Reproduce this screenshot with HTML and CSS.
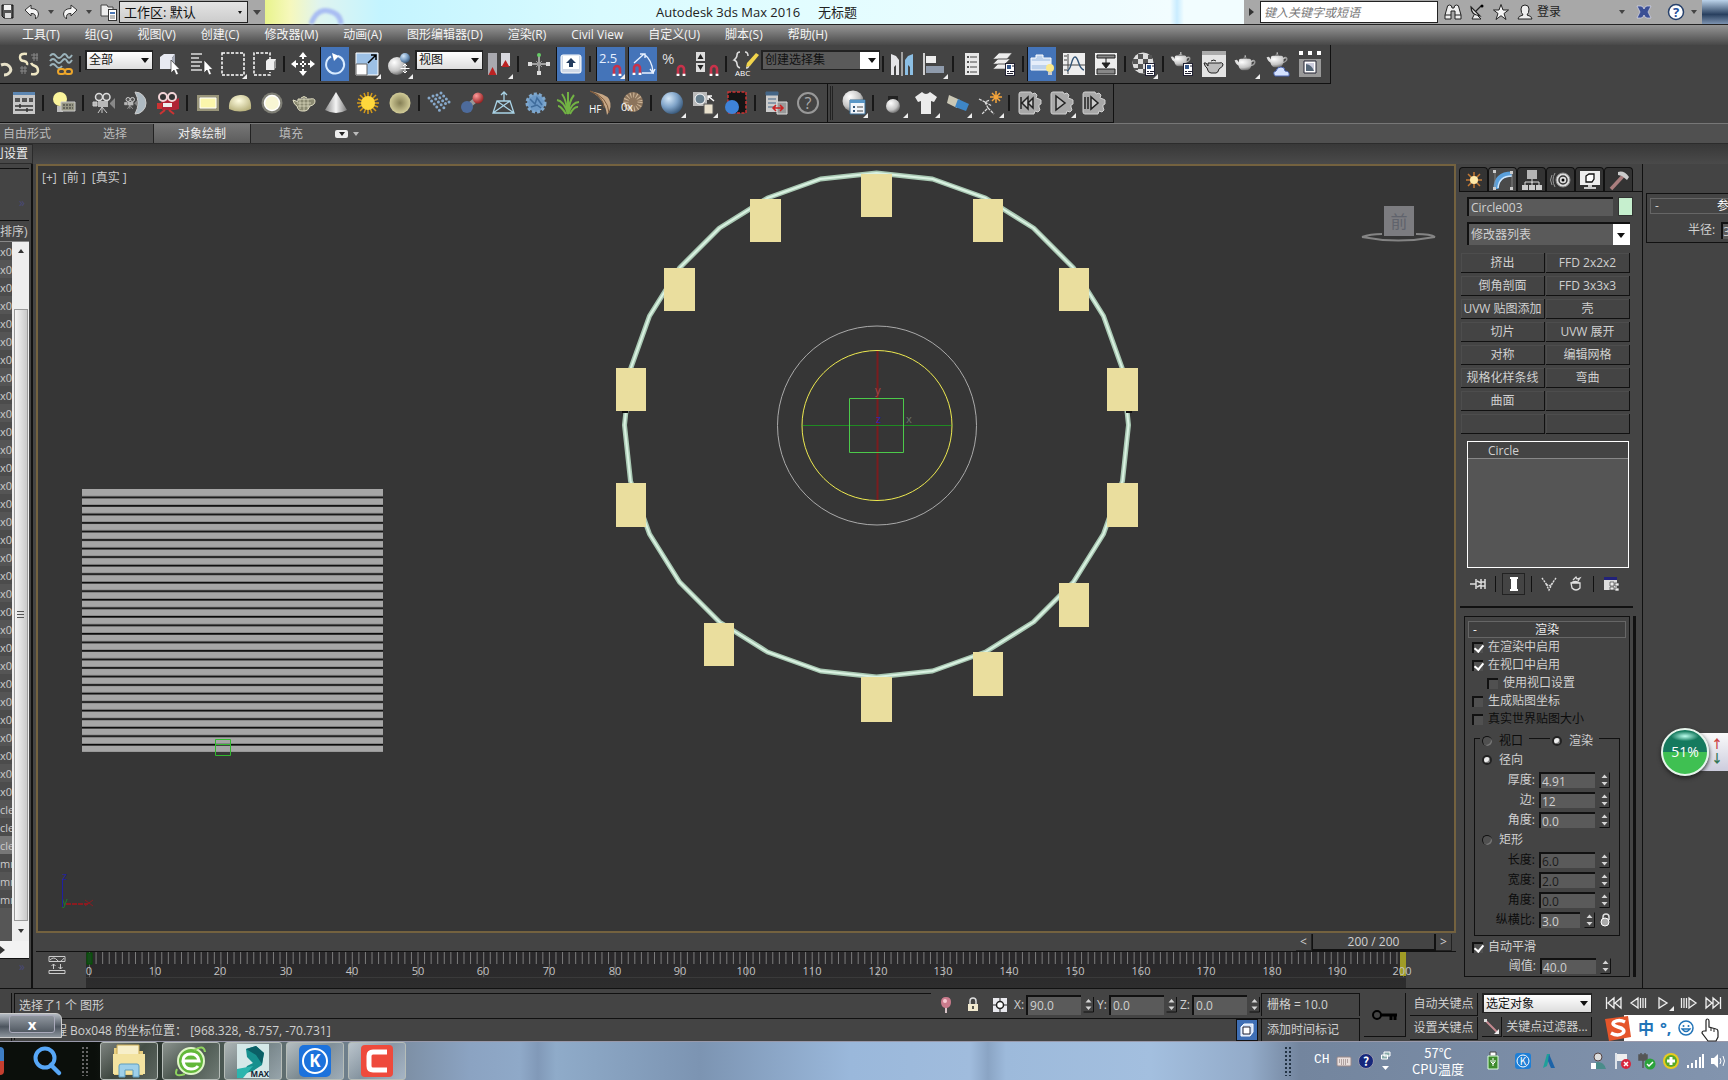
FILE: index.html
```html
<!DOCTYPE html>
<html lang="zh-CN">
<head>
<meta charset="utf-8">
<title>Autodesk 3ds Max 2016 无标题</title>
<link rel="stylesheet" href="styles.css">
</head>
<body>
<svg class="defs" aria-hidden="true">
  <defs>
    <radialGradient id="gBlue" cx=".35" cy=".3" r=".8"><stop offset="0" stop-color="#d5e8f8"/><stop offset=".5" stop-color="#7fa3c8"/><stop offset="1" stop-color="#2b4a6b"/></radialGradient>
    <radialGradient id="gWhite" cx=".35" cy=".3" r=".8"><stop offset="0" stop-color="#fff"/><stop offset=".6" stop-color="#c4c4c4"/><stop offset="1" stop-color="#555"/></radialGradient>
    <radialGradient id="gRed" cx=".35" cy=".3" r=".8"><stop offset="0" stop-color="#ff9c9c"/><stop offset="1" stop-color="#8c1414"/></radialGradient>
    <radialGradient id="gCream" cx=".45" cy=".35" r=".7"><stop offset="0" stop-color="#fffde0"/><stop offset="1" stop-color="#b5ae78"/></radialGradient>
    <radialGradient id="gDisc"><stop offset="0" stop-color="#857f55"/><stop offset="1" stop-color="#d2cc98"/></radialGradient>
    <linearGradient id="gCone"><stop offset="0" stop-color="#888"/><stop offset=".5" stop-color="#f5f5f5"/><stop offset="1" stop-color="#777"/></linearGradient>
    <symbol id="magnet" viewBox="0 0 10 12"><path d="M2 11V5a3 3 0 0 1 6 0v6" fill="none" stroke="#c8324a" stroke-width="2.6"/><path d="M.6 10.8h2.8M6.6 10.8h2.8" stroke="#fff" stroke-width="2.2"/></symbol>
    <symbol id="teapot" viewBox="0 0 24 20"><path d="M5 7q0-2 2-2h9q2 0 2 2 3-2 4.500 0.500Q23.500 11 18 13q-1.500 4-4 4H9q-3 0-4.500-5Q2 11 .500 6.500L3 6q1 1 2 3z" fill="url(#gWhite)"/><path d="M18.500 8.500q3-1.500 2.500.500t-2.700 2.500z" fill="#444"/><path d="M9 4.500q2.500-1.800 5 0zM11 1.500h1.500V3H11z" fill="#ddd"/></symbol>
    <symbol id="cursor" viewBox="0 0 10 16"><path d="M1 0v13l3-3 2 5 2.500-1L6.500 9.500H10z" fill="#fff" stroke="#333" stroke-width=".7"/></symbol>
    <symbol id="gear" viewBox="0 0 24 24"><path d="M3 1h10l1 2 3-1 2 2-1 3 3 1 2 1v4l-2 1v2l1 3-2 2-3-1-1 3H3q-2 0-2-2V3q0-2 2-2z" fill="#a8a8a8" stroke="#d0d0d0"/></symbol>
    <symbol id="spin" viewBox="0 0 11 16"><path d="M.5 15.500h10V.5" fill="none" stroke="#111"/><path d="M2.500 6 5.500 2.500 8.500 6zM2.500 10h6l-3 3.500z" fill="#d5d5d5"/></symbol>
    <symbol id="panel" viewBox="0 0 10 13"><rect x=".5" y=".5" width="9" height="12" fill="#fff" stroke="#223"/><rect x="2" y="2" width="4" height="4" fill="#37598c"/><path d="M7 3h2M2 8.500h2M5 8.500h4M2 10.500h6" stroke="#223"/></symbol>
    <symbol id="camera" viewBox="0 0 24 24"><circle cx="7" cy="6" r="3.500" fill="#555" stroke="#ddd" stroke-width="1.500"/><circle cx="14.500" cy="6" r="3.500" fill="#555" stroke="#ddd" stroke-width="1.500"/><path d="M6 10h10v6H6z" fill="#b8b8b8"/><path d="M18 12l5-5v11l-5-5z" fill="#888"/><path d="M1 11h4v4H1zM10 16l-4 6M10 16l5 6M10 16v6" stroke="#ccc" fill="#bbb"/></symbol>
  </defs>
</svg>

<header class="title">
  <div class="quick">
    <button aria-label="保存"><svg width="16" height="18" viewBox="0 0 16 18"><path d="M2 2h11v13H4l-2-2z" fill="#555" stroke="#111"/><path d="M4 2h7v5H4z" fill="#f2f2f2"/><path d="M5 10h6v5H5z" fill="#ddd"/></svg></button>
    <button class="undo" aria-label="撤消"><svg width="16" height="18" viewBox="0 0 16 18"><path d="M1 7l6-5v3.500q7 0 7.500 5.500 0 3-3 5 1-6-4.500-5.500V13z" fill="#f5f5f5" stroke="#333"/></svg></button><i class="tri"></i>
    <button class="redo" aria-label="重做"><svg width="16" height="18" viewBox="0 0 16 18"><path d="M15 7L9 2v3.500q-7 0-7.500 5.500 0 3 3 5-1-6 4.500-5.500V13z" fill="#f5f5f5" stroke="#333"/></svg></button><i class="tri"></i>
    <button class="proj" aria-label="项目文件夹"><svg width="18" height="20" viewBox="0 0 18 20"><path d="M1 3h6l1 2h5v9H1z" fill="#eee" stroke="#444"/><rect x="8.500" y="7.500" width="8" height="11" fill="#fff" stroke="#333"/><path d="M10 10h5v2h-5z" fill="#4a76b5"/><path d="M10 14h5M10 16h5" stroke="#777"/></svg></button>
    <label class="sel work"><select aria-label="工作区"><option>工作区: 默认</option></select></label>
    <i class="tri wide"></i>
  </div>
  <svg class="glow" width="60" height="24" viewBox="0 0 60 24"><path d="M12 24Q18 8 30 11t12 13" fill="none" stroke="#a9bdf2" stroke-width="5"/></svg>
  <h1><span>Autodesk 3ds Max 2016</span><span>无标题</span></h1>
  <div class="info">
    <i class="right-tri"></i>
    <input type="text" aria-label="搜索" placeholder="键入关键字或短语">
    <button aria-label="查找"><svg width="18" height="18" viewBox="0 0 18 18"><path d="M3 5q0-3 2.500-3T8 5h2q0-3 2.500-3T15 5l2 7v4h-6V8H7v8H1v-4z" fill="#eee" stroke="#222"/><path d="M1 12h6M11 12h6" stroke="#222"/></svg></button>
    <button aria-label="通讯中心"><svg width="18" height="18" viewBox="0 0 18 18"><path d="M3 4q0 8 9 9zM3 4l9 9M8 8l5-5" fill="#eee" stroke="#222" stroke-width="1.200"/><path d="M6 12l-2 4h9l-3-3" fill="#eee" stroke="#222"/><circle cx="14" cy="3" r="1.500"/></svg></button>
    <button aria-label="收藏夹"><svg width="18" height="18" viewBox="0 0 18 18"><path d="M9 1.500l2 5.500h5.500L12 10.500l2 6-5-3.800-5 3.800 2-6L1.500 7H7z" fill="#f5f5f5" stroke="#222"/></svg></button>
    <button class="login"><svg width="18" height="18" viewBox="0 0 18 18"><path d="M2 16q0-3 5-4-2-2-2-6 0-4 4-4t4 4q0 4-2 6 5 1 5 4z" fill="#eee" stroke="#222"/></svg>登录</button>
    <i class="tri push"></i>
    <button aria-label="Exchange"><svg width="18" height="18" viewBox="0 0 18 18"><path d="M2 3h4q2 0 3 3 1-3 3-3h4q-3 6-3 6t3 6h-4q-2 0-3-3-1 3-3 3H2q3-6 3-6z" fill="#3b4f94" stroke="#dde" stroke-width=".7"/></svg></button>
    <button aria-label="帮助" class="help"><svg width="18" height="18" viewBox="0 0 18 18"><circle cx="9" cy="9" r="7.500" fill="#fff" stroke="#26406b" stroke-width="1.500"/><text x="9" y="14" text-anchor="middle" font-size="13" font-weight="bold" fill="#26509c">?</text></svg></button><i class="tri"></i>
  </div>
  <div class="winctl"></div>
</header>

<nav class="menu">
  <a href="#">工具(T)</a><a href="#">组(G)</a><a href="#">视图(V)</a><a href="#">创建(C)</a><a href="#">修改器(M)</a><a href="#">动画(A)</a><a href="#">图形编辑器(D)</a><a href="#">渲染(R)</a><a href="#">Civil View</a><a href="#">自定义(U)</a><a href="#">脚本(S)</a><a href="#">帮助(H)</a>
</nav>

<div class="bar bar1">
 <div class="group">
  <button class="half" aria-label="链接"><svg width="24" height="24" viewBox="0 0 24 24"><path d="M12 13q5-2 8 1t1 6-6 3" fill="none" stroke="#e6e0c8" stroke-width="3"/></svg></button>
  <button aria-label="断开链接"><svg width="24" height="24" viewBox="0 0 24 24"><path d="M10 2Q3 1 3 5t4 4q4 1 3 4" fill="none" stroke="#efe7c4" stroke-width="2.500"/><path d="M14 22q7 1 7-3t-3-5q-3-1-4-3" fill="none" stroke="#efe7c4" stroke-width="2.500"/><path d="M14 3h7M15 6h6M17 1v8M20 1v8M3 16h7M3 19h7M5 14v8M8 14v8" stroke="#888"/></svg></button>
  <button aria-label="绑定到空间扭曲"><svg width="24" height="24" viewBox="0 0 24 24"><g fill="none" stroke="#9cb4bc" stroke-width="2"><path d="M1 4q3-4 6 0t6 0 5 0 5-1M1 9q3-4 6 0t6 0 5 0 5-1M1 14q3-4 6 0t6 0"/></g><rect x="9" y="17" width="7" height="5" rx="2.500" fill="none" stroke="#eda62b" stroke-width="2"/><rect x="16" y="17" width="7" height="5" rx="2.500" fill="none" stroke="#eda62b" stroke-width="2"/></svg></button>
  <i class="sep w"></i>
  <label class="sel all"><select aria-label="选择过滤器"><option>全部</option></select></label>
  <button aria-label="选择对象"><svg width="24" height="24" viewBox="0 0 24 24"><path d="M3 5l4-3h11l-3 4v11H3z" fill="#e8eaf2"/><path d="M15 6l3-4v12l-3 3z" fill="#a6abb8"/><use href="#cursor" x="13" y="8" width="10" height="16"/></svg></button>
  <button aria-label="按名称选择"><svg width="24" height="24" viewBox="0 0 24 24"><path d="M2 2h11M2 6h8M2 10h11M2 14h9M2 18h11" stroke="#ddd" stroke-width="1.500"/><use href="#cursor" x="14" y="8" width="10" height="16"/></svg></button>
  <button class="fly" aria-label="矩形选择区域"><svg width="24" height="24" viewBox="0 0 24 24"><path d="M1 1h22v22H1z" fill="none" stroke="#fff" stroke-width="1.500" stroke-dasharray="3 1.500"/></svg></button>
  <button aria-label="窗口/交叉"><svg width="24" height="24" viewBox="0 0 24 24"><path d="M17 8V1H1v22h16v-3" fill="none" stroke="#fff" stroke-width="1.500" stroke-dasharray="3 1.500"/><path d="M13 9l2-2h8v8l-2 3h-8z" fill="#eee"/><path d="M21 10l2-3v8l-2 3z" fill="#999"/></svg></button>
  <i class="sep"></i>
  <button aria-label="选择并移动"><svg width="24" height="24" viewBox="0 0 24 24"><path d="M12 0l4 5H8zM12 24l4-5H8zM0 12l5-4v8zM24 12l-5-4v8z" fill="#fff"/><path d="M12 5v14M5 12h14" stroke="#fff" stroke-width="2" stroke-dasharray="2 2"/></svg></button>
  <button class="on" aria-label="选择并旋转"><svg width="24" height="24" viewBox="0 0 24 24"><path d="M15 4a9 9 0 1 1-7 .5" fill="none" stroke="#d8ebff" stroke-width="2"/><path d="M9 1l7 3-5 5z" fill="#fff"/></svg></button>
  <button class="fly" aria-label="选择并缩放"><svg width="24" height="24" viewBox="0 0 24 24"><path d="M1 1h22v22H1z" fill="#9dc1e6" stroke="#fff"/><path d="M1 12h11v11H1z" fill="#fff" stroke="#666"/><path d="M13 11l8-8M16 3h5v5" fill="none" stroke="#000" stroke-width="1.500"/></svg></button>
  <button class="fly" aria-label="选择并放置"><svg width="24" height="24" viewBox="0 0 24 24"><circle cx="10" cy="14" r="9" fill="url(#gWhite)"/><circle cx="18" cy="6" r="5" fill="url(#gBlue)"/><path d="M18 12v9M13.500 16.500h9M16 14l2-2 2 2M16 19l2 2 2-2" fill="none" stroke="#fff"/></svg></button>
  <label class="sel all"><select aria-label="参考坐标系"><option>视图</option></select></label>
  <button class="fly" aria-label="使用轴点中心"><svg width="24" height="24" viewBox="0 0 24 24"><path d="M1 1h9v22H1z" fill="#a9a9af"/><path d="M14 1h9v13h-9z" fill="#d9d9df"/><path d="M5.500 15l4 8h-8zM18.500 8l4 7h-8z" fill="#b22"/></svg></button>
  <i class="sep w"></i>
  <button aria-label="选择并操纵"><svg width="24" height="24" viewBox="0 0 24 24"><path d="M12 3v18M3 12h18" stroke="#fff"/><path d="M9 9l6 6M15 9l-6 6" stroke="#999"/><circle cx="12" cy="3" r="2" fill="#6c6"/><path d="M1 10h4v4H1zM19 10h4v4h-4zM10 19h4v4h-4z" fill="#ddd"/></svg></button>
  <button class="on" aria-label="键盘快捷键覆盖"><svg width="24" height="24" viewBox="0 0 24 24"><rect x="2" y="3" width="20" height="18" rx="2" fill="#cfd8e6" stroke="#fff"/><rect x="4" y="4" width="16" height="13" fill="#fff"/><path d="M12 6l5 5h-3v4h-4v-4H7z" fill="#233b5e"/></svg></button>
  <i class="sep w"></i>
  <button class="on fly" aria-label="捕捉开关"><svg width="26" height="26" viewBox="0 0 26 26"><text x="1" y="12" font-size="13" fill="#e6f0ff">2.5</text><use href="#magnet" x="14" y="13" width="10" height="12"/></svg></button>
  <button class="on" aria-label="角度捕捉"><svg width="26" height="26" viewBox="0 0 26 26"><path d="M12 22h12M4 12L14 3M14 3q8 6 9 18M10 3h5v4M20 18l3 4 2-4" fill="none" stroke="#e6f0ff" stroke-width="1.400"/><use href="#magnet" x="2" y="12" width="10" height="12"/></svg></button>
  <button aria-label="百分比捕捉"><svg width="26" height="26" viewBox="0 0 26 26"><text x="0" y="13" font-size="15" fill="#ddd">%</text><use href="#magnet" x="14" y="13" width="10" height="12"/></svg></button>
  <button aria-label="微调器捕捉"><svg width="26" height="26" viewBox="0 0 26 26"><path d="M2 1h9v9H2zM2 12h9v9H2z" fill="#ddd"/><path d="M3.500 8h6l-3-5zM3.500 14h6l-3 5z" fill="#222"/><use href="#magnet" x="15" y="13" width="10" height="12"/></svg></button>
  <i class="sep"></i>
  <button aria-label="编辑命名选择集"><svg width="26" height="28" viewBox="0 0 26 28"><path d="M8 2Q5 2 5 5t-3 5q3 1 3 4t3 4M14 18q3 0 3-4M13 2q3 0 3 4" fill="none" stroke="#ddd" stroke-width="1.500"/><path d="M24 3l3 2-9 11-4 1 1-4z" fill="#f1d44c"/><text x="3" y="26" font-size="8" fill="#fff">ABC</text></svg></button>
  <label class="sel named"><select aria-label="创建选择集"><option>创建选择集</option></select></label>
  <i class="sep"></i>
  <button aria-label="镜像"><svg width="24" height="24" viewBox="0 0 24 24"><path d="M1 2l5 2 3 4v15H6V13l-2 2v8H1z" fill="#e5e5e8"/><path d="M23 2l-5 2-3 4v15h3V13l2 2v8h3z" fill="#8cbfe4"/><path d="M12 0v24" stroke="#fff"/></svg></button>
  <button class="fly" aria-label="对齐"><svg width="24" height="24" viewBox="0 0 24 24"><path d="M2 1v22" stroke="#fff" stroke-width="1.500"/><path d="M4 4h10v7H4z" fill="#eee"/><path d="M4 14h18v7H4z" fill="#8f9bac"/></svg></button>
  <i class="sep"></i>
  <button aria-label="层资源管理器"><svg width="24" height="24" viewBox="0 0 24 24"><path d="M5 1h14v22H5z" fill="#e9e9e9"/><path d="M10 5h7M10 10h7M10 15h7M10 20h7" stroke="#444"/><path d="M7 4h2v2H7zM7 9h2v2H7zM7 14h2v2H7zM7 19h2v2H7z" fill="#555"/></svg></button>
  <button aria-label="层管理器"><svg width="24" height="24" viewBox="0 0 24 24"><path d="M7 1h13l-5 6H1zM6 7h12l-5 5H1zM6 12h12l-5 5H1z" fill="#eee" stroke="#555" stroke-width=".6"/><use href="#panel" x="13" y="11" width="10" height="13"/></svg></button>
  <i class="sep"></i>
  <button class="on" aria-label="切换功能区"><svg width="26" height="24" viewBox="0 0 26 24"><path d="M2 6h5V3h7v3h8v12H2z" fill="#bed2ec" stroke="#fff"/><path d="M2 9h20v4H2z" fill="#e6eefa"/><circle cx="21" cy="16" r="4" fill="#fbe88a"/><path d="M19 20h4v3h-4z" fill="#ccc"/></svg></button>
  <button aria-label="曲线编辑器"><svg width="24" height="24" viewBox="0 0 24 24"><path d="M1 1h22v22H1z" fill="#eee"/><path d="M6 2v20M1 13h22M2 4h3M2 8h3M2 18h3" stroke="#444"/><path d="M5 19C10 18 9 5 13 5s3 12 9 13" fill="none" stroke="#357" stroke-width="1.400"/></svg></button>
  <button aria-label="图解视图"><svg width="24" height="24" viewBox="0 0 24 24"><path d="M1 1h22v22H1z" fill="#eee"/><path d="M3 3h18v3H3zM3 17h18v5H3z" fill="#888" stroke="#222"/><path d="M12 6v9M8 11l4 5 4-5z" stroke="#222" fill="#222"/></svg></button>
  <i class="sep"></i>
  <button class="fly" aria-label="材质编辑器"><svg width="24" height="24" viewBox="0 0 24 24"><circle cx="11" cy="11" r="10.500" fill="#ddd"/><path d="M6 2h5v5H6zM11 7h5v5h-5zM16 3h4v4h-4zM1 7h5v5H1zM6 12h5v5H6zM11 17h4v4h-4zM2 16h4v2H2z" fill="#555"/><use href="#panel" x="13" y="11" width="10" height="13"/></svg></button>
  <i class="sep"></i>
  <button aria-label="渲染设置"><svg width="24" height="26" viewBox="0 0 24 26"><use href="#teapot" width="22" height="18"/><use href="#panel" x="13" y="12" width="10" height="13"/></svg></button>
  <button aria-label="渲染帧窗口"><svg width="24" height="26" viewBox="0 0 24 26"><path d="M0 0h24v26H0z" fill="#e4e4e4"/><path d="M0 0h24v4H0z" fill="#aaa"/><path d="M6 12h11q3-1 4 1t-4 5q-1 4-3 4H9q-3 0-4-5-2-1-3-5h2l2 3zM9 10q3-2 5 0" fill="#bbb" stroke="#222"/></svg></button>
  <button class="fly" aria-label="渲染产品"><svg width="24" height="24" viewBox="0 0 24 24"><use href="#teapot" y="2" width="23" height="19"/></svg></button>
  <button aria-label="云渲染"><svg width="24" height="26" viewBox="0 0 24 26"><use href="#teapot" width="23" height="19"/><path d="M9 25q-3-4 1-5 1-4 5-4t4 4q5 0 4 5z" fill="#d4e2ff" stroke="#4a62ac"/></svg></button>
  <button aria-label="渲染库"><svg width="24" height="26" viewBox="0 0 24 26"><path d="M1 0h4v4H1zM10 0h4v4h-4zM19 0h4v4h-4z" fill="#fff"/><path d="M1 8h22v18H1z" fill="#999"/><path d="M6 10h12v12H6z" fill="#fff" stroke="#223"/><path d="M8 12h8v8H8z" fill="#ccd"/><path d="M8 20v-7q6 1 8 7z" fill="#567"/></svg></button>
 </div>
</div>

<div class="bar bar2">
 <div class="group">
  <button class="first" aria-label="场景设置"><svg width="24" height="24" viewBox="0 0 24 24"><path d="M1 1h22v22H1z" fill="#c8c8c8"/><path d="M1 1h22v3H1z" fill="#5c86b2"/><path d="M3 7h5v4H3zM10 7h5v4h-5zM17 7h4v4h-4z" fill="#555"/><path d="M3 15h18M3 19h18M8 13v4M15 17v4" stroke="#333" stroke-width="1.500"/></svg></button>
  <i class="sep"></i>
  <button aria-label="灯光"><svg width="24" height="24" viewBox="0 0 24 24"><circle cx="8" cy="8" r="7" fill="#fbf49b"/><path d="M5 15h6v6H5z" fill="#bbb"/><path d="M9 11h14v9H9z" fill="#969684" stroke="#ccc"/><path d="M11 14h10M11 17h10" stroke="#333" stroke-dasharray="2 1"/></svg></button>
  <i class="sep"></i>
  <button aria-label="摄影机"><svg width="24" height="24" viewBox="0 0 24 24"><use href="#camera" width="24" height="24"/></svg></button>
  <button aria-label="半球摄影机"><svg width="24" height="24" viewBox="0 0 24 24"><path d="M11 1a11 11 0 0 1 0 22q6-11 0-22z" fill="#aebac2" stroke="#ccc"/><use href="#camera" y="4" width="14" height="16"/></svg></button>
  <button aria-label="红色摄影机"><svg width="24" height="24" viewBox="0 0 24 24"><path d="M5 9h14l4-2v11l-4 1H6z" fill="#b02436"/><circle cx="7" cy="6" r="4" fill="#333" stroke="#f3d5d8" stroke-width="2"/><circle cx="16" cy="6" r="4" fill="#333" stroke="#f3d5d8" stroke-width="2"/><path d="M7 12h9v4H7z" fill="#eee"/><path d="M2 13h3v4H2zM9 19l-5 4M13 19l5 4" fill="#c33" stroke="#c33" stroke-width="2"/></svg></button>
  <i class="sep"></i>
  <button aria-label="平面灯"><svg width="24" height="24" viewBox="0 0 24 24"><path d="M1 4h22v16H1z" fill="#99957a"/><path d="M4 7h16v10H4z" fill="#fbf6ab" stroke="#fff"/></svg></button>
  <button aria-label="穹顶灯"><svg width="24" height="24" viewBox="0 0 24 24"><path d="M1 18Q0 5 12 4t11 14q-11 5-22 0z" fill="url(#gCream)"/></svg></button>
  <button aria-label="球体灯"><svg width="24" height="24" viewBox="0 0 24 24"><circle cx="12" cy="12" r="10.500" fill="#7f7f76"/><circle cx="12" cy="12" r="7.500" fill="#f8f6d4" stroke="#fff" stroke-width="1.500"/></svg></button>
  <button aria-label="网格灯"><svg width="24" height="24" viewBox="0 0 24 24"><path d="M6 8h12q5-1 5 2 0 4-5 5-2 5-5 5h-3q-4 0-5-5-3-1-4-6l3 1q1 1 2 0zM9 7q3-3 6 0" fill="#8b8a72" stroke="#e2dfc4"/><path d="M8 8v10M12 7v13M16 8v10M5 12h14M6 15h12" stroke="#e2dfc4" stroke-width=".7"/></svg></button>
  <button aria-label="圆锥"><svg width="24" height="24" viewBox="0 0 24 24"><path d="M12 1l11 18q-11 6-22 0z" fill="url(#gCone)"/></svg></button>
  <button aria-label="太阳光"><svg width="24" height="24" viewBox="0 0 24 24"><path d="M12 1v22M1 12h22M4 4l16 16M20 4L4 20M8 2l8 20M2 8l20 8M16 2L8 22M2 16l20-8" stroke="#d59b1a" stroke-width="1.500"/><circle cx="12" cy="12" r="7" fill="#ffd83c"/></svg></button>
  <button aria-label="圆盘灯"><svg width="24" height="24" viewBox="0 0 24 24"><circle cx="12" cy="12" r="10.500" fill="url(#gDisc)"/></svg></button>
  <i class="sep"></i>
  <button aria-label="粒子阵列"><svg width="24" height="24" viewBox="0 0 24 24"><path d="M1 7l12 14M5 5l12 13M9 4l11 11M13 2l9 10" fill="none" stroke="#87a9cb" stroke-width="3" stroke-linecap="round" stroke-dasharray="0 4"/></svg></button>
  <button aria-label="融合球"><svg width="24" height="24" viewBox="0 0 24 24"><path d="M7 16L18 7" stroke="#999" stroke-width="5"/><circle cx="7" cy="16" r="6" fill="#4d6b9c"/><circle cx="18" cy="7" r="5.500" fill="url(#gRed)"/></svg></button>
  <button aria-label="代理"><svg width="24" height="24" viewBox="0 0 24 24"><path d="M5 10h13l4 12H1zM5 10l17 12M18 10L1 22M12 10V1M9 4l3-3 3 3" fill="none" stroke="#a9d3e6" stroke-width="1.300"/></svg></button>
  <button aria-label="毛发"><svg width="24" height="24" viewBox="0 0 24 24"><circle cx="12" cy="12" r="9" fill="#6b98c6"/><circle cx="12" cy="12" r="9" fill="none" stroke="#7fa8cd" stroke-width="3" stroke-dasharray="3 2"/><path d="M6 8l5 5 2-6 5 7M7 16l6-2 4 3" fill="none" stroke="#3f6c9c" stroke-width="1.500"/></svg></button>
  <button aria-label="草"><svg width="24" height="24" viewBox="0 0 24 24"><path d="M12 23Q8 10 1 9M12 23Q10 8 6 3M12 23V1M12 23q1-13 6-19M12 23q4-12 11-12M10 23Q5 15 2 15M14 23q4-8 8-7" fill="none" stroke="#72b344" stroke-width="2"/></svg></button>
  <button aria-label="HairFarm"><svg width="26" height="26" viewBox="0 0 26 26"><path d="M3 1q16 3 19 8 4 8-2 16Q18 9 3 1z" fill="#c7a785"/><path d="M3 1q18 6 19 22M3 1q14 6 14 17" fill="none" stroke="#7c5a3c"/><text x="2" y="23" font-size="10" fill="#fff">HF</text></svg></button>
  <button aria-label="Ornatrix"><svg width="26" height="26" viewBox="0 0 26 26"><circle cx="14" cy="12" r="10" fill="#8c745c"/><circle cx="14" cy="12" r="7" fill="none" stroke="#cbb497" stroke-width="5" stroke-dasharray="1 2"/><text x="2" y="21" font-size="11" fill="#fff">0x</text></svg></button>
  <i class="sep"></i>
  <button class="fly" aria-label="材质球"><svg width="24" height="24" viewBox="0 0 24 24"><circle cx="12" cy="12" r="11" fill="url(#gBlue)"/></svg></button>
  <button class="fly" aria-label="材质转换"><svg width="24" height="24" viewBox="0 0 24 24"><path d="M1 1h14v14H1z" fill="#bbb"/><circle cx="8" cy="8" r="5" fill="#667d8c" stroke="#fff"/><path d="M22 10l-6-5M16 9V5h4" fill="none" stroke="#fff" stroke-width="1.500"/><path d="M12 13h9v10h-9z" fill="#e9e1cd" stroke="#555"/></svg></button>
  <button aria-label="区域渲染"><svg width="24" height="24" viewBox="0 0 24 24"><path d="M4 1h18v21H4z" fill="#151515" stroke="#c33" stroke-width="1.500" stroke-dasharray="3 1.500"/><circle cx="8" cy="16" r="7" fill="#3e83d8"/></svg></button>
  <i class="sep"></i>
  <button aria-label="资源追踪"><svg width="24" height="24" viewBox="0 0 24 24"><path d="M2 1h12v20H2z" fill="#ccc"/><path d="M2 1h12v3H2zM4 8h8M4 12h8M4 16h8" fill="#468" stroke="#468"/><path d="M13 11h10v12H13z" fill="#999" stroke="#ddd"/><path d="M9 17h10M12 14l-3 3 3 3M16 14l3 3-3 3" fill="none" stroke="#c22" stroke-width="1.500"/></svg></button>
  <button aria-label="帮助"><svg width="24" height="24" viewBox="0 0 24 24"><circle cx="12" cy="12" r="10" fill="none" stroke="#999" stroke-width="2"/><text x="12" y="18" font-size="16" text-anchor="middle" fill="#aaa">?</text></svg></button>
 </div>
 <div class="group second">
  <i class="grip"></i>
  <button class="fly" aria-label="MassFX 工具"><svg width="24" height="26" viewBox="0 0 24 26"><circle cx="11" cy="11" r="10.500" fill="url(#gWhite)"/><path d="M8 10h15v14H8z" fill="#f1f5fa" stroke="#3b6c93"/><path d="M8 10h15v3H8z" fill="#5996c6"/><path d="M11 16h2v2h-2zM11 20h2v2h-2z" fill="#357"/><path d="M15 17h6M15 21h6" stroke="#444"/></svg></button>
  <i class="sep"></i>
  <button class="fly" aria-label="刚体"><svg width="24" height="24" viewBox="0 0 24 24"><path d="M6 5h10v6H6z" fill="#222"/><circle cx="11" cy="15" r="7" fill="url(#gWhite)"/></svg></button>
  <button class="fly" aria-label="布料"><svg width="24" height="24" viewBox="0 0 24 24"><path d="M8 1q4 4 8 0l7 5-3 5-3-1v13H7V10l-3 1-3-5z" fill="#ebebeb"/></svg></button>
  <button class="fly" aria-label="约束"><svg width="24" height="24" viewBox="0 0 24 24"><path d="M3 4l11 5-3 8-10-5z" fill="#cbc8b6"/><path d="M12 8l11 5-3 7-11-4z" fill="#3e86c6"/></svg></button>
  <button class="fly" aria-label="碎布玩偶"><svg width="24" height="24" viewBox="0 0 24 24"><path d="M18 0v12M12 6h12M14 2l8 8M22 2l-8 8" stroke="#f5a53b" stroke-width="1.500"/><path d="M1 8l6 3 5-2M7 11l3 6-6 6M10 17l6 6M7 11l7 4" fill="none" stroke="#ddd" stroke-width="1.300" stroke-dasharray="3 1"/></svg></button>
  <i class="sep"></i>
  <button aria-label="重置模拟"><svg width="24" height="24" viewBox="0 0 24 24"><use href="#gear" width="24" height="24"/><path d="M3 6v12M10 6v12l-6-6zM15 7v10l-5-5z" fill="#ccc" stroke="#222" stroke-width="1.500"/></svg></button>
  <button class="fly" aria-label="开始模拟"><svg width="24" height="24" viewBox="0 0 24 24"><use href="#gear" width="24" height="24"/><path d="M6 5v14l9-7z" fill="#bbb" stroke="#222" stroke-width="1.500"/></svg></button>
  <button aria-label="逐帧模拟"><svg width="24" height="24" viewBox="0 0 24 24"><use href="#gear" width="24" height="24"/><path d="M3 6v12M6 6v12M9 6v12l7-6z" fill="#ccc" stroke="#222" stroke-width="1.500"/></svg></button>
 </div>
</div>

<nav class="ribbon">
  <button>自由形式</button><button>选择</button><button class="active">对象绘制</button><button>填充</button>
  <span class="mini"><i class="pill"></i><i class="tri"></i></span>
</nav>
<div class="strip"><span>刂设置</span></div>

<main>
  <aside class="explorer">
    <div class="ex-top"><span>»</span></div>
    <div class="ex-head">排序)</div>
    <div class="ex-body">
      <ul>
        <li>x0</li><li>x0</li><li>x0</li><li>x0</li><li>x0</li><li>x0</li><li>x0</li><li>x0</li><li>x0</li><li>x0</li><li>x0</li><li>x0</li><li>x0</li><li>x0</li><li>x0</li><li>x0</li><li>x0</li><li>x0</li><li>x0</li><li>x0</li><li>x0</li><li>x0</li><li>x0</li><li>x0</li><li>x0</li><li>x0</li><li>x0</li><li>x0</li><li>x0</li><li>x0</li><li>x0</li><li>cle</li><li>cle</li><li class="cur">cle</li><li>mı</li><li>mı</li><li>mı</li>
      </ul>
      <div class="vscroll"><i class="up"></i><div class="thumb"><i></i></div><i class="down"></i></div>
    </div>
    <div class="hscroll"><i class="right-tri"></i></div>
    <div class="ex-foot"><span>»</span></div>
  </aside>

  <section class="center">
    <div class="viewport">
      <div class="vp-label"><span>[+]</span><span>[前 ]</span><span>[真实 ]</span></div>
      <svg class="scene" viewBox="38 166 1416 765" preserveAspectRatio="xMidYMid slice">
        <defs>
          <pattern id="slats" x="82" y="489" width="301" height="8.530" patternUnits="userSpaceOnUse"><rect width="301" height="8.530" fill="#a6a6a6"/><rect y="7.400" width="301" height="1.130" fill="#080808"/><rect width="301" height=".7" fill="#080808"/></pattern>
        </defs>
        <rect x="82" y="489" width="301" height="263" fill="url(#slats)"/>
        <path d="M82 489h301v3H82z" fill="#a6a6a6"/>
        <path d="M215.500 739.500h15v16h-15zM215.500 744.500h15" fill="none" stroke="#32b82e"/>
        <g transform="translate(876.500 425)" fill="none" stroke-linejoin="round">
          <path d="M0-252L56-246 109-227 157-197 197-157 227-109 246-56 252 0 246 56 227 109 197 157 157 197 109 227 56 246 0 252-56 246-109 227-157 197-197 157-227 109-246 56-252 0-246-56-227-109-197-157-157-197-109-227-56-246z" stroke="#a9c8b3" stroke-width="5"/>
          <path d="M0-252L56-246 109-227 157-197 197-157 227-109 246-56 252 0 246 56 227 109 197 157 157 197 109 227 56 246 0 252-56 246-109 227-157 197-197 157-227 109-246 56-252 0-246-56-227-109-197-157-157-197-109-227-56-246z" stroke="#daf2e2" stroke-width="2"/>
        </g>
        <path d="M622 410h6v3h-6zM1126 410h6v3h-6z" fill="#111"/>
        <path fill="#eade9e" d="M861 174h31v43h-31zM750 199h31v43h-31zM973 199h30v43h-30zM664 268h31v43h-31zM1059 268h30v43h-30zM616 368h30v43h-30zM1107 368h31v43h-31zM616 483h30v44h-30zM1107 483h31v44h-31zM1059 583h30v44h-30zM704 623h30v43h-30zM973 652h30v44h-30zM861 677h31v45h-31z"/>
        <g fill="none">
          <circle cx="877" cy="425.500" r="99.500" stroke="#aaa"/>
          <path d="M877.500 351v149" stroke="#7a1c1e" stroke-width="2"/>
          <path d="M802 425.500h150" stroke="#1f8a22"/>
          <circle cx="877" cy="425.500" r="75" stroke="#eeea50"/>
          <path d="M849.500 398.500h54v54h-54z" stroke="#4cc94a"/>
        </g>
        <g font-size="11" font-family="Noto Sans, sans-serif"><text x="875" y="394" fill="#a04648">y</text><text x="876" y="423" fill="#2a27b0">z</text><text x="906" y="423" fill="#667066">x</text>
        <text x="62" y="880" fill="#22229a">z</text><text x="62" y="905" fill="#1f7a2c">y</text></g>
        <path d="M62.500 880v27" stroke="#1f1fa0"/><path d="M66 904h22" stroke="#8c1b20" stroke-width="2" stroke-dasharray="5 1"/><path d="M85 900l8 6M93 900l-8 6" stroke="#8c1b20"/>
        <path d="M1362 237q8-3 20-3M1416 234q15 0 19 3M1362 237q36 7 73 0" fill="none" stroke="#848484" stroke-width="2"/>
        <path d="M1384 206h30v30h-30z" fill="#7c7c80"/>
        <text x="1399" y="228" text-anchor="middle" font-size="17" fill="#60636c">前</text>
      </svg>
    </div>
    <div class="slider"><button>&lt;</button><output>200 / 200</output><button>&gt;</button></div>
    <div class="track">
      <button aria-label="打开迷你曲线编辑器"><svg width="18" height="20" viewBox="0 0 18 20"><path d="M1 1.500h16v5H1zM1 15.500h16v3H1zM2 5q4-4 7 0t7-2M5.500 14V9M3.500 11l2-2 2 2M12.500 9v5M10.500 12l2 2 2-2" fill="none" stroke="#ccc"/></svg></button>
      <svg class="ticks" viewBox="0 0 1320 36" preserveAspectRatio="xMinYMin slice">
        <path d="M3 6h1316" stroke="#7c7c7c" stroke-width="12" stroke-dasharray="1 5.570"/>
        <path d="M3 18.500h1316" stroke="#606060" stroke-width="13" stroke-dasharray="1 64.700"/>
        <path d="M0 25.500h1320" stroke="#3a3a3a"/>
        <rect x="1" y="1" width="5" height="11" fill="#174a1c" stroke="#050"/><path d="M1314 0h6v24h-6z" fill="#a09c26"/>
        <g font-size="11" fill="#c4c4c4" text-anchor="middle"><text x="3" y="23">0</text><text x="69" y="23">10</text><text x="134" y="23">20</text><text x="200" y="23">30</text><text x="266" y="23">40</text><text x="332" y="23">50</text><text x="397" y="23">60</text><text x="463" y="23">70</text><text x="529" y="23">80</text><text x="594" y="23">90</text><text x="660" y="23">100</text><text x="726" y="23">110</text><text x="792" y="23">120</text><text x="857" y="23">130</text><text x="923" y="23">140</text><text x="989" y="23">150</text><text x="1055" y="23">160</text><text x="1120" y="23">170</text><text x="1186" y="23">180</text><text x="1251" y="23">190</text><text x="1316" y="23">200</text></g>
      </svg>
    </div>
  </section>

  <aside class="command">
    <div class="cmd">
      <div class="tabs">
        <button aria-label="创建"><svg width="22" height="20" viewBox="0 0 22 20"><path d="M11 2v16M3 10h16M5 4l12 12M17 4L5 16" stroke="#c57a34" stroke-width="1.500"/><circle cx="11" cy="10" r="4" fill="#ffe9a8"/></svg></button>
        <button class="active" aria-label="修改"><svg width="22" height="20" viewBox="0 0 22 20"><path d="M4 19Q4 4 20 4" fill="none" stroke="#5aa0dc" stroke-width="5"/><path d="M6 18Q7 6 20 6" fill="none" stroke="#cfe8ff" stroke-width="1.500"/><path d="M3 1v18M20 3v16" fill="none" stroke="#999" stroke-width=".7"/><path d="M1 0h3v3H1zM18 1h3v3h-3zM1 17h3v3H1zM18 17h3v3h-3z" fill="#ccc"/></svg></button>
        <button aria-label="层次"><svg width="22" height="20" viewBox="0 0 22 20"><path d="M6 0h10v9H6z" fill="#b5b5b5"/><path d="M11 9v4M4 15v-3h14v3M11 12v3" stroke="#ddd" fill="none"/><path d="M1 15h6v5H1zM8 15h6v5H8zM15 15h6v5h-6z" fill="#ccc"/></svg></button>
        <button aria-label="运动"><svg width="22" height="20" viewBox="0 0 22 20"><circle cx="13" cy="10" r="7" fill="#ddd" stroke="#888"/><circle cx="13" cy="10" r="4" fill="none" stroke="#333" stroke-width="1.500"/><circle cx="13" cy="10" r="1.500"/><path d="M5 3q-4 7 0 14M2 5q-3 5 0 10" fill="none" stroke="#999"/></svg></button>
        <button aria-label="显示"><svg width="22" height="20" viewBox="0 0 22 20"><path d="M1 1h20v14H1z" fill="#eee"/><path d="M7 6l3-2h5v5l-2 3H7z" fill="#fff" stroke="#111" stroke-width="1.300"/><path d="M9 15h4v2h4v2H5v-2h4z" fill="#ccc"/></svg></button>
        <button aria-label="实用程序"><svg width="22" height="20" viewBox="0 0 22 20"><path d="M3 19L15 6" stroke="#a97d7d" stroke-width="3.500"/><path d="M10 2q6-2 11 5l-2 3-5-4-4-1z" fill="#ccc"/></svg></button>
      </div>
      <div class="name-row"><input type="text" value="Circle003" aria-label="名称"><button class="swatch" aria-label="对象颜色"></button></div>
      <label class="modlist"><select aria-label="修改器列表"><option>修改器列表</option></select></label>
      <div class="mods">
        <button>挤出</button><button>FFD 2x2x2</button><button>倒角剖面</button><button>FFD 3x3x3</button><button>UVW 贴图添加</button><button>壳</button><button>切片</button><button>UVW 展开</button><button>对称</button><button>编辑网格</button><button>规格化样条线</button><button>弯曲</button><button>曲面</button><button aria-label="空"></button><button aria-label="空"></button><button aria-label="空"></button>
      </div>
      <div class="stack"><div>Circle</div></div>
      <div class="stack-tools">
        <button aria-label="锁定堆栈"><svg width="18" height="16" viewBox="0 0 18 16"><path d="M1 8h6M7 3v10M8 5l4 2V3M8 11l4-2v4M16 3v10M12 6h4M12 10h4" fill="none" stroke="#ddd" stroke-width="1.500"/></svg></button>
        <i></i>
        <button class="box" aria-label="显示最终结果"><svg width="8" height="16" viewBox="0 0 8 16"><path d="M0 1h8v2H7v10h1v2H0v-2h1V3H0z" fill="#fff"/></svg></button>
        <i></i>
        <button aria-label="使唯一"><svg width="16" height="16" viewBox="0 0 16 16"><path d="M1 2l5 7M15 2l-5 7M5 8l3 6 3-6-3 2z" fill="none" stroke="#ddd" stroke-width="1.400" stroke-dasharray="2 1"/></svg></button>
        <button aria-label="移除修改器"><svg width="14" height="16" viewBox="0 0 14 16"><path d="M2 7h9v5q-4 4-8 0zM2 7q4-3 9 0M4 4l3-3 1 2 3-1-2 3" fill="none" stroke="#ddd" stroke-width="1.300"/></svg></button>
        <i></i>
        <button aria-label="配置修改器集"><svg width="17" height="16" viewBox="0 0 17 16"><path d="M1 1h13v13H1z" fill="#ddd"/><path d="M1 1h13v3H1z" fill="#22227a"/><path d="M7 6h4v4H7zM12 7h4v3h-4zM7 11h4v3H7zM12 12h4v3h-4z" fill="#eee" stroke="#444" stroke-width=".7"/></svg></button>
      </div>
      <div class="rollup">
        <div class="params">
          <h2><span>-</span>渲染</h2>
          <label class="chk"><input type="checkbox" checked>在渲染中启用</label>
          <label class="chk"><input type="checkbox" checked>在视口中启用</label>
          <label class="chk in"><input type="checkbox">使用视口设置</label>
          <label class="chk"><input type="checkbox">生成贴图坐标</label>
          <label class="chk off"><input type="checkbox" disabled>真实世界贴图大小</label>
          <fieldset>
            <div class="radios"><label class="off"><input type="radio" name="target" disabled>视口</label><b></b><label><input type="radio" name="target" checked>渲染</label></div>
            <label class="rad"><input type="radio" name="shape" checked>径向</label>
            <label class="num"><span>厚度:</span><input type="text" value="4.91"><svg><use href="#spin"/></svg></label>
            <label class="num"><span>边:</span><input type="text" value="12"><svg><use href="#spin"/></svg></label>
            <label class="num"><span>角度:</span><input type="text" value="0.0"><svg><use href="#spin"/></svg></label>
            <label class="rad"><input type="radio" name="shape">矩形</label>
            <label class="num off"><span>长度:</span><input type="text" value="6.0" disabled><svg><use href="#spin"/></svg></label>
            <label class="num off"><span>宽度:</span><input type="text" value="2.0" disabled><svg><use href="#spin"/></svg></label>
            <label class="num off"><span>角度:</span><input type="text" value="0.0" disabled><svg><use href="#spin"/></svg></label>
            <div class="num ratio"><label class="off" for="ratio">纵横比:</label><input id="ratio" type="text" value="3.0"><svg><use href="#spin"/></svg><button aria-label="锁定纵横比"><svg viewBox="0 0 12 14"><path d="M4 6V4q0-3 3-3t3 3v3" fill="none" stroke="#ddd" stroke-width="1.500"/><circle cx="6" cy="9" r="4" fill="#aaa" stroke="#fff"/></svg></button></div>
          </fieldset>
          <label class="chk"><input type="checkbox" checked>自动平滑</label>
          <label class="num last"><span>阈值:</span><input type="text" value="40.0"><svg><use href="#spin"/></svg></label>
        </div>
      </div>
    </div>
    <div class="extra">
      <div class="params2">
        <h2><span>-</span><b>参数</b></h2>
        <label>半径:<input type="text" value="3"></label>
      </div>
    </div>
  </aside>
</main>

<footer class="status">
  <div class="messages">
    <div class="msg">选择了1 个 图形</div>
    <div class="msg prompt">程 Box048 的坐标位置： [968.328, -8.757, -70.731]</div>
    <div class="ghost"><button aria-label="关闭">x</button></div>
  </div>
  <div class="coords">
    <div class="line">
      <button aria-label="孤立当前选择"><svg width="14" height="18" viewBox="0 0 14 18"><path d="M7 1q5 0 5 5t-4 6v5H6v-5Q2 11 2 6t5-5z" fill="#c97b8c"/><circle cx="6" cy="5" r="2" fill="#f6c9d2"/><path d="M7 12v5" stroke="#ddd" stroke-width="1.500"/></svg></button>
      <button aria-label="选择锁定"><svg width="14" height="18" viewBox="0 0 14 18"><path d="M4 8V5q0-3 3-3t3 3v3" fill="none" stroke="#ddd" stroke-width="1.500"/><path d="M2 8h10v7H2z" fill="#f1e9cf"/><path d="M7 10v3" stroke="#222" stroke-width="1.500"/></svg></button>
      <button aria-label="绝对模式变换输入"><svg width="16" height="18" viewBox="0 0 16 18"><path d="M1 2h14v14H1z" fill="#e9e9ee"/><circle cx="8" cy="9" r="3.500" fill="#fff" stroke="#222" stroke-width="1.500"/><path d="M8 2v4M8 12v4M1 9h4M11 9h4" stroke="#222"/></svg></button>
      <label>X:<input type="text" value="90.0"><svg><use href="#spin"/></svg></label>
      <label>Y:<input type="text" value="0.0"><svg><use href="#spin"/></svg></label>
      <label>Z:<input type="text" value="0.0"><svg><use href="#spin"/></svg></label>
    </div>
    <div class="line end"><button class="tag" aria-label="自适应降级"><svg width="16" height="18" viewBox="0 0 16 18"><path d="M2 6l3-3h9v8l-3 4H2z" fill="#cfe0f8" stroke="#fff"/><path d="M4 6h7v7H4z" fill="#fff" stroke="#223"/></svg></button></div>
  </div>
  <div class="grid-info"><div>栅格 = 10.0</div><button>添加时间标记</button></div>
  <button class="key" aria-label="设置关键点"><svg width="28" height="16" viewBox="0 0 28 16"><circle cx="6" cy="8" r="4" fill="none" stroke="#000" stroke-width="2"/><path d="M10 8h16M20 8v5M24 8v5" stroke="#000" stroke-width="3"/></svg></button>
  <div class="keys"><button>自动关键点</button><button>设置关键点</button></div>
  <div class="filters">
    <label class="sel"><select aria-label="选定对象"><option>选定对象</option></select></label>
    <div><button class="tangent fly" aria-label="切线"><svg width="18" height="18" viewBox="0 0 18 18"><path d="M3 3l11 11" stroke="#c58a90" stroke-width="2"/><path d="M1 1h3v3H1z" fill="#ddd"/></svg></button><button class="kf">关键点过滤器...</button></div>
  </div>
  <div class="play">
    <button aria-label="转至开头"><svg width="18" height="14" viewBox="0 0 18 14"><path d="M1.500 1v12M9 2v10L3 7zM16 2v10l-6-5z" fill="#555" stroke="#eee" stroke-width="1.300"/></svg></button>
    <button aria-label="上一帧"><svg width="18" height="14" viewBox="0 0 18 14"><path d="M8 2v10L1 7zM10.500 2v10M13 2v10M15.500 2v10" fill="#555" stroke="#eee" stroke-width="1.300"/></svg></button>
    <button class="fly" aria-label="播放"><svg width="18" height="14" viewBox="0 0 18 14"><path d="M4 2v10l8-5z" fill="#555" stroke="#eee" stroke-width="1.300"/></svg></button>
    <button aria-label="下一帧"><svg width="18" height="14" viewBox="0 0 18 14"><path d="M10 2v10l7-5zM7.500 2v10M5 2v10M2.500 2v10" fill="#555" stroke="#eee" stroke-width="1.300"/></svg></button>
    <button aria-label="转至结尾"><svg width="18" height="14" viewBox="0 0 18 14"><path d="M16.500 1v12M9 2v10l6-5zM2 2v10l6-5z" fill="#555" stroke="#eee" stroke-width="1.300"/></svg></button>
  </div>
</footer>

<footer class="taskbar">
  <button class="orb" aria-label="开始"></button>
  <button class="search" aria-label="搜索"><svg width="30" height="30" viewBox="0 0 30 30"><circle cx="13" cy="12" r="9.500" fill="none" stroke="#57a7f7" stroke-width="4"/><path d="M19 19l8 8" stroke="#57a7f7" stroke-width="4.500" stroke-linecap="round"/></svg></button>
  <i class="dots dim"></i>
  <div class="apps">
    <button aria-label="资源管理器"><svg width="36" height="34" viewBox="0 0 36 34"><path d="M3 4h10l2 3h17v24H3z" fill="#e9cf7f"/><path d="M6 1h22v10H6z" fill="#f7efc9" stroke="#c8a850"/><path d="M2 10h32v20H2z" fill="#f3e3a0"/><path d="M8 33V22q0-2 2-2h16q2 0 2 2v11h-6v-7h-8v7z" fill="#9ed0ea" stroke="#5d9dc0"/></svg></button>
    <button aria-label="浏览器"><svg width="34" height="34" viewBox="0 0 34 34"><circle cx="17" cy="17" r="13" fill="#62b83a" stroke="#dff5c8" stroke-width="2"/><path d="M25 17H9q0-7 8-7 7 0 8 7zM9 17q1 8 8 8 5 0 7-3" fill="none" stroke="#fff" stroke-width="3"/><path d="M3 25q-4 9 8 5M20 6q10-6 11 2" fill="none" stroke="#8ed35e" stroke-width="2"/></svg></button>
    <button class="lit" aria-label="3ds Max"><svg width="34" height="34" viewBox="0 0 34 34"><path d="M1 0h32v34H1z" fill="#d5e8e8"/><path d="M10 5l10-3 8 7-2 12-9 6-10 3 4-8 6-3-6-6z" fill="#16908e"/><path d="M10 5l10 6 6 9 2-11-8-7z" fill="#0b5f66"/><path d="M1 25l16-3-10 12H1z" fill="#2cb5ae"/><text x="33" y="33" text-anchor="end" font-size="8" font-weight="bold" fill="#123">MAX</text></svg></button>
    <button class="lit" aria-label="K"><svg width="34" height="34" viewBox="0 0 34 34"><rect x="1" y="1" width="32" height="32" rx="5" fill="#1c72dc"/><circle cx="17" cy="17" r="12" fill="none" stroke="#fff" stroke-width="2"/><text x="17" y="23" text-anchor="middle" font-size="17" font-weight="bold" fill="#fff">K</text></svg></button>
    <button class="lit" aria-label="Camtasia"><svg width="34" height="34" viewBox="0 0 34 34"><rect x="1" y="1" width="32" height="32" rx="4" fill="#ee4a3c"/><path d="M27 8H13q-4 0-4 4v10q0 4 4 4h14" fill="none" stroke="#fff" stroke-width="5"/></svg></button>
  </div>
  <div class="tray">
    <i class="dots"></i>
    <span class="lang">CH</span>
    <svg width="16" height="14" viewBox="0 0 16 14"><rect x="1" y="3" width="14" height="9" rx="1" fill="#e8dedc" stroke="#988"/><path d="M3 6h10M3 8h10M5 10h6" stroke="#766" stroke-dasharray="1 1"/></svg>
    <svg width="16" height="16" viewBox="0 0 16 16"><circle cx="8" cy="8" r="7.500" fill="#16277c" stroke="#99a"/><text x="8" y="13" text-anchor="middle" font-size="12" font-weight="bold" fill="#fff">?</text></svg>
    <svg width="12" height="22" viewBox="0 0 12 22"><path d="M4 2h6v4H4zM1.500 5h6v4h-6z" fill="#8aa" stroke="#fff"/><path d="M2 16h7l-3.500 4z" fill="#fff"/></svg>
    <div class="temp"><span>57℃</span><span>CPU温度</span></div>
    <svg width="14" height="20" viewBox="0 0 14 20"><path d="M4 1h6v4H4z" fill="#fff" stroke="#444"/><path d="M2 5h10v13H2z" fill="#3d8c2c" stroke="#dfd"/><path d="M7 7v8M5 9v2l2 2 2-2V9" fill="none" stroke="#fff"/></svg>
    <svg class="kicon" width="18" height="18" viewBox="0 0 18 18"><rect x="1" y="1" width="16" height="16" rx="3" fill="#1f7fd6"/><circle cx="9" cy="9" r="6" fill="none" stroke="#fff"/><text x="9" y="13" text-anchor="middle" font-size="10" fill="#fff">K</text></svg>
    <svg width="14" height="16" viewBox="0 0 14 16"><path d="M1 15L5 1h3L5 13z" fill="#1fa09a"/><path d="M7 1l6 14H9L6 8z" fill="#1c63a8"/></svg>
    <svg class="later" width="18" height="18" viewBox="0 0 18 18"><circle cx="8" cy="5" r="4" fill="#ddd" stroke="#544"/><path d="M2 17q0-7 6-7t8 7z" fill="#4a8c8a"/><path d="M1 11h5v6H1z" fill="#fff"/></svg>
    <svg width="18" height="18" viewBox="0 0 18 18"><path d="M2 1v16" stroke="#fff" stroke-width="1.500"/><path d="M3 2h10v7H3z" fill="#eee"/><circle cx="12" cy="12" r="5" fill="#d8263c"/><path d="M10 10l4 4M14 10l-4 4" stroke="#fff" stroke-width="1.500"/></svg>
    <svg width="18" height="18" viewBox="0 0 18 18"><path d="M1 3h8v5H1zM3 1v2M7 1v2M5 8v8" fill="#555" stroke="#555" stroke-width="1.500"/><circle cx="12" cy="12" r="5.500" fill="#2ba33b"/><path d="M9 12l2 2 4-4" fill="none" stroke="#fff" stroke-width="1.500"/></svg>
    <svg width="18" height="18" viewBox="0 0 18 18"><circle cx="9" cy="9" r="8" fill="#e8cb1e"/><circle cx="9" cy="9" r="6" fill="#57a82a"/><path d="M9 5v8M5 9h8" stroke="#fff" stroke-width="3"/></svg>
    <svg width="18" height="16" viewBox="0 0 18 16"><path d="M1 12h2v3H1zM5 10h2v5H5zM9 7h2v8H9zM13 4h2v11h-2zM16 1h2v14h-2z" fill="#fff"/></svg>
    <svg width="16" height="16" viewBox="0 0 16 16"><path d="M1 5h3l4-4v14l-4-4H1z" fill="#fff"/><path d="M10 5q2 3 0 6M13 3q3 5 0 10" fill="none" stroke="#fff"/></svg>
  </div>
</footer>

<div class="ime">
  <svg width="28" height="26" viewBox="0 0 28 26"><path d="M1 4l23-3 3 21-22 4z" fill="#e5552a"/><path d="M21 7q-6-3-11 0-3 3 4 5 8 2 5 6-5 4-12 0" fill="none" stroke="#fff" stroke-width="3.500"/></svg>
  <span>中</span><span>°,</span>
  <svg width="18" height="18" viewBox="0 0 18 18"><circle cx="9" cy="9" r="7" fill="none" stroke="#2274b8" stroke-width="1.500"/><circle cx="6.500" cy="7" r="1" fill="#2274b8"/><circle cx="11.500" cy="7" r="1" fill="#2274b8"/><path d="M5 10q4 5 8 0z" fill="none" stroke="#2274b8" stroke-width="1.300"/></svg>
  <svg class="hand" width="20" height="24" viewBox="0 0 20 24"><path d="M6 13V3q0-2 1.500-2T9 3v6l7 2q2 0 2 3v5l-2 4H8l-6-8q0-2 2-2z" fill="#fff" stroke="#222" stroke-width="1.200"/><path d="M11 10v3M14 11v3" stroke="#222"/></svg>
</div>
<div class="float-ball"><div class="ball">51%</div><div class="rates"><span>↑</span><span>↓</span></div></div>
</body>
</html>
```
FILE: styles.css
```css
* { box-sizing: border-box; }
body {
  margin: 0; height: 100vh; overflow: hidden; display: flex; flex-direction: column; position: relative;
  background: #444; color: #d0d0d0;
  font: 12px/16px "Open Sans", "Noto Sans CJK SC", sans-serif;
}
button, input, select { font: inherit; color: inherit; margin: 0; padding: 0; border: 0; background: none; border-radius: 0; }
button { display: flex; align-items: center; justify-content: center; white-space: nowrap; }
select { appearance: none; width: 100%; height: 100%; outline: 0; }
svg { display: block; flex: none; overflow: visible; }
h1, h2, ul, fieldset { margin: 0; padding: 0; border: 0; font: inherit; list-style: none; }
.defs { position: absolute; width: 0; height: 0; }

.tri { border: 3px solid transparent; border-top: 4px solid #444; border-bottom: 0; }
.right-tri { border: 4px solid transparent; border-left: 5px solid #333; border-right: 0; }

/* title bar */
.title { height: 25px; flex: none; display: flex; border-bottom: 1px solid #222; background: linear-gradient(90deg, #e8f48c 265px, #f6f8bc 290px, #dff4f0 320px, #c4f4ff 380px, #d9fbff 600px, #e2fdff 800px, #eefcff 1100px, #f2fdff 1170px, #c9ecff 1177px, #f2fdff 1184px); }
.quick { width: 265px; display: flex; align-items: center; background: #a8a8a8; }
.quick .undo, .quick .redo { margin: 0 8px; }
.quick .proj { margin: 0 4px 0 8px; }
.quick .wide { margin-left: 5px; border-width: 5px 4px 0; }
.glow { margin-left: 34px; filter: blur(1px); overflow: hidden; }
.sel { position: relative; display: block; height: 20px; color: #111; border: 1px solid #222; border-width: 2px 1px 1px 2px; background: linear-gradient(#fff, #ddd); }
.sel select { padding-left: 2px; }
.sel::after { content: ""; position: absolute; right: 3px; top: 6px; border: 4px solid transparent; border-top: 5px solid #111; border-bottom: 0; }
.sel.work { width: 129px; height: 22px; border-width: 1px; margin-left: -3px; background: linear-gradient(#e4e4e4, #ccc); }
.sel.work select { padding-left: 4px; font-size: 13px; }
.sel.work::after { border-width: 3px 2px 0; top: 9px; right: 5px; }
.title h1 { flex: 1; display: flex; gap: 18px; padding-left: 297px; align-items: center; font-size: 13px; color: #222; }
.info { width: 458px; display: flex; align-items: center; gap: 6px; padding: 0 5px; background: #a8a8a8; color: #222; }
.info > input { width: 178px; height: 22px; background: #fff; border: 1px solid #222; padding-left: 3px; font-style: italic; }
.info > input::placeholder { color: #777; }
.info .login { gap: 3px; }
.info .push { margin-left: auto; margin-right: 4px; }
.info .help { margin-left: 8px; }
.winctl { width: 26px; background: linear-gradient(#bcd3ea, #29405f 60%, #7d93b0); }

.menu { height: 20px; flex: none; display: flex; gap: 25px; padding-left: 22px; align-items: center; background: linear-gradient(#969696, #484848); }
.menu a { color: #f4f4f4; text-decoration: none; }

/* tool bars */
.bar { height: 39px; flex: none; display: flex; }
.group { display: flex; align-items: center; border-right: 1px solid #111; border-bottom: 1px solid #111; }
.group button { width: 32px; height: 34px; position: relative; flex: none; }
.group button.half { width: 13px; justify-content: flex-end; overflow: hidden; }
.group button.on { background: linear-gradient(90deg, transparent 1px, #111 1px, #111 2px, #4474b9 2px, #4474b9 30px, transparent 30px); }
.fly { position: relative; }
.fly::after { content: ""; position: absolute; right: 2px; bottom: 2px; border-left: 5px solid transparent; border-bottom: 5px solid #eee; }
.bar1 .group { padding-bottom: 1px; padding-right: 4px; }
.bar1 .sel { margin-bottom: 8px; }
.sep { width: 6px; height: 16px; flex: none; background: linear-gradient(90deg, transparent 2px, #181818 2px, #181818 4px, transparent 4px); }
.sep.w, .bar2 .sep { width: 8px; }
.sel.all { width: 68px; }
.sel.named { width: 119px; background: linear-gradient(90deg, #5a5a5a 97px, #fff 97px); }
.group .first { margin-left: 8px; }
.bar2 .group { padding-right: 3px; }
.grip { width: 3px; height: 34px; margin: 0 5px 0 2px; border: 1px solid #222; border-width: 0 1px; }

/* ribbon */
.ribbon { height: 21px; flex: none; display: flex; background: #505050; border-top: 1px solid #777; border-bottom: 1px solid #2c2c2c; color: #bbb; }
.ribbon button { padding: 0 26px; }
.ribbon button:first-child { padding-left: 3px; }
.ribbon .active { width: 98px; padding: 0; color: #eee; background: linear-gradient(#777, #5c5c5c); border: 1px solid #222; border-width: 0 1px; }
.ribbon button:nth-child(4) { padding: 0 32px 0 28px; }
.mini { display: flex; align-items: center; gap: 5px; }
.mini .tri { border-top-color: #bbb; }
.pill { width: 13px; height: 8px; border-radius: 2px; background: #eee; display: flex; justify-content: center; align-items: center; }
.pill::after { content: ""; border: 3px solid transparent; border-top: 4px solid #222; border-bottom: 0; }
.strip { height: 20px; flex: none; display: flex; background: linear-gradient(#383838, #4a4a4a); }
.strip span { width: 33px; padding-right: 4px; display: flex; justify-content: flex-end; align-items: center; white-space: nowrap; overflow: hidden; color: #eee; border: 1px solid #2b2b2b; border-left: 0; background: #484848; }

main { flex: 1; min-height: 0; display: grid; grid-template-columns: 33px minmax(0, 1fr) 269px; column-gap: 3px; border-bottom: 1px solid #111; }

/* scene explorer */
.explorer { display: flex; flex-direction: column; min-height: 0; border-right: 2px solid #111; padding-right: 2px; color: #ccc; }
.ex-top { height: 53px; margin-top: 4px; border-top: 1px solid #111; border-bottom: 1px solid #111; text-align: right; padding: 24px 4px 0 0; color: #4a4a78; line-height: 20px; }
.ex-head { height: 21px; line-height: 21px; overflow: hidden; white-space: nowrap; border-bottom: 1px solid #888; }
.ex-body { flex: 1; min-height: 0; display: flex; overflow: hidden; }
.ex-body ul { width: 12px; overflow: hidden; background: #565656; font-size: 11px; }
.ex-body li { height: 18px; line-height: 19px; background: #4c4c4c; white-space: nowrap; }
.ex-body li:nth-child(even) { background: #555; }
.ex-body li.cur { background: #777; }
.vscroll { flex: 1; display: flex; flex-direction: column; align-items: center; background: #eee; }
.vscroll .up { margin: 7px 0 56px; border: 3px solid transparent; border-bottom: 4px solid #333; border-top: 0; }
.vscroll .down { margin: 8px 0; border: 3px solid transparent; border-top: 4px solid #333; border-bottom: 0; }
.thumb { flex: 1; width: 14px; display: grid; place-items: center; background: linear-gradient(90deg, #f5f5f5, #c9c9c9); border: 1px solid #999; }
.thumb i { width: 7px; height: 8px; background: repeating-linear-gradient(#555 0 1px, transparent 1px 3px); }
.hscroll { height: 17px; background: #f2f2f2; display: flex; align-items: center; }
.ex-foot { height: 30px; border-top: 1px solid #111; text-align: right; padding-right: 4px; color: #4a4a78; }

/* viewport and time line */
.center { display: flex; flex-direction: column; min-width: 0; min-height: 0; }
.viewport { flex: 1; min-height: 0; position: relative; border: 2px solid #74623f; background: #363636; overflow: hidden; }
.scene { width: 100%; height: 100%; }
.vp-label { position: absolute; left: 4px; top: 4px; display: flex; gap: 6px; color: #ccc; }
.slider { height: 19px; flex: none; display: flex; justify-content: flex-end; padding: 1px 4px 0 0; border-bottom: 1px solid #111; }
.slider button { width: 16px; border: 1px solid #222; border-width: 0 1px 1px 0; }
.slider output { width: 124px; text-align: center; border: 1px solid #111; border-width: 0 2px 2px 1px; }
.track { height: 36px; flex: none; display: flex; padding-right: 50px; }
.track button { width: 50px; padding: 0 8px 10px 0; }
.ticks { flex: 1; height: 36px; min-width: 0; background: linear-gradient(#2a292b 12px, #2d2d2d); }

/* command panel */
.command { display: grid; grid-template-columns: 184px 1fr; min-height: 0; }
.cmd { display: flex; flex-direction: column; border-right: 1px solid #111; padding-right: 9px; }
.tabs { display: flex; height: 28px; flex: none; padding-top: 3px; border-bottom: 1px solid #111; margin-right: -10px; }
.tabs button { width: 29px; border: 1px solid #111; border-bottom: 0; border-radius: 4px 4px 0 0; background: #333; }
.tabs .active { background: #4a4a4a; }
.name-row { display: flex; gap: 5px; margin: 5px 0 0 8px; }
.name-row input { width: 146px; height: 19px; padding-left: 2px; background: #5a5a5a; border: 1px solid #111; border-width: 2px 0 0 2px; outline: 0; }
.swatch { width: 16px; height: 19px; background: #c6efce; border: 1px solid #333; }
.modlist { display: flex; margin: 6px 0 8px 8px; width: 163px; height: 23px; border: 1px solid #111; border-width: 2px 0 0 2px; background: linear-gradient(90deg, #5a5a5a 144px, #fff 144px); position: relative; }
.modlist select { padding-left: 2px; }
.modlist::after { content: ""; position: absolute; right: 5px; top: 9px; border: 4px solid transparent; border-top: 5px solid #111; border-bottom: 0; }
.mods { display: grid; grid-template-columns: 84px 84px; grid-auto-rows: 20px; gap: 3px 1px; margin: 0 0 7px 2px; }
.mods button { border: 1px solid #111; border-width: 0 1px 1px 0; box-shadow: inset 1px 1px #4d4d4d; overflow: hidden; }
.stack { width: 162px; height: 127px; flex: none; margin-left: 8px; border: 1px solid #fff; background: #555; }
.stack div { height: 17px; padding-left: 20px; line-height: 17px; background: #444; border-bottom: 1px solid #888; }
.stack-tools { height: 32px; flex: none; margin: 0 0 6px 9px; display: flex; align-items: center; gap: 7px; }
.stack-tools i { width: 1px; height: 16px; background: #111; }
.stack-tools button { height: 22px; width: 20px; }
.stack-tools .box { border: 1px solid #222; width: 23px; margin: 0 -1px; }
.rollup { flex: none; margin: 0 0 0 1px; border-top: 2px solid #111; padding-top: 8px; }
.params { width: 166px; margin-left: 4px; border: 1px solid #111; padding: 0 3px; height: 361px; box-shadow: 3px 0 #444, 6px 0 #111; background: #444; display: flex; flex-direction: column; }
.params h2 { display: flex; justify-content: center; position: relative; height: 17px; margin: 4px 0 0; border: 1px solid #666; line-height: 15px; color: #eee; flex: none; background: #3f3f3f; }
.params h2 span { position: absolute; left: 4px; }
.chk { display: flex; align-items: center; gap: 5px; height: 18px; padding-left: 4px; flex: none; }
.chk.in { padding-left: 19px; }
.off { color: #0c0c0c; }
input[type=checkbox], input[type=radio] { appearance: none; flex: none; width: 11px; height: 11px; position: relative; background: #505050; border: 1px solid #111; border-width: 2px 0 0 2px; }
input[type=checkbox]:checked::after { content: ""; position: absolute; left: 2px; top: -1px; width: 4px; height: 7px; border: solid #fff; border-width: 0 2px 2px 0; transform: rotate(40deg); }
input[type=radio] { width: 10px; height: 10px; border-radius: 50%; border-width: 1px 0 0 1px; box-shadow: inset -1px -1px #777; }
input[type=radio]:checked { background: #eee; border: 2px solid #222; }
.params fieldset { flex: none; margin: 10px 6px 2px; height: 198px; border: 1px solid #111; display: flex; flex-direction: column; }
.radios { display: flex; align-items: center; height: 18px; margin: -7px 0 0 5px; flex: none; }
.radios label { display: flex; align-items: center; gap: 7px; background: #444; padding: 0 6px 0 2px; }
.radios b { width: 9px; margin-left: auto; }
.radios label:last-child { margin-right: 20px; }
.rad { display: flex; align-items: center; gap: 7px; height: 20px; padding-left: 7px; flex: none; }
.num { display: flex; align-items: center; justify-content: flex-end; height: 20px; padding-right: 9px; gap: 4px; flex: none; }
.num input { width: 56px; height: 16px; padding-left: 1px; background: #5a5a5a; border: 1px solid #111; border-width: 2px 0 0 2px; line-height: 13px; }
.num input:disabled { color: #1a1a1a; }
.num > svg { width: 11px; height: 16px; }
.num.ratio { padding-right: 8px; }
.num.ratio input { width: 41px; }
.num.ratio button, .num.ratio button svg { width: 12px; height: 14px; }
.num.last { padding-right: 15px; }
.extra { padding: 29px 0 0 3px; overflow: hidden; }
.params2 { width: 200px; border: 1px solid #111; height: 50px; }
.params2 h2 { display: flex; height: 16px; margin: 4px 3px 8px; line-height: 14px; border: 1px solid #666; }
.params2 h2 span { width: 66px; padding-left: 4px; }
.params2 h2 b { font-weight: normal; color: #fff; white-space: nowrap; }
.params2 label { display: flex; gap: 6px; padding-left: 41px; }
.params2 input { width: 50px; height: 17px; background: #5a5a5a; border: 1px solid #111; border-width: 2px 0 0 2px; }

/* status bar */
.status { height: 52px; flex: none; display: flex; padding-top: 4px; overflow: hidden; }
.messages { flex: 1; position: relative; display: flex; flex-direction: column; gap: 3px; margin-left: 11px; border-left: 1px solid #111; padding-left: 2px; }
.msg { height: 22px; line-height: 23px; padding-left: 4px; border: 1px solid #111; border-width: 1px 0 0 1px; }
.msg.prompt { padding-left: 40px; white-space: pre; }
.ghost { position: absolute; left: -14px; top: 20px; width: 64px; height: 25px; padding: 1px 5px 6px 10px; background: linear-gradient(#b5bcc4, #4c545e 55%, #8c949c); border: 1px solid #ccc; border-radius: 0 6px 0 0; }
.ghost button { width: 46px; height: 18px; background: linear-gradient(#8f969e, #525a63); border: 1px solid #aab; border-radius: 3px; color: #fff; font-weight: bold; font-size: 15px; line-height: 14px; }
.coords { width: 330px; display: flex; flex-direction: column; gap: 2px; padding-left: 2px; }
.line { height: 23px; display: flex; align-items: center; gap: 2px; }
.line.end { justify-content: flex-end; padding-right: 3px; border-top: 1px solid #111; margin-left: -2px; }
.line > button { width: 25px; height: 22px; }
.line .tag { width: 22px; height: 22px; background: #3f6fb5; border: 1px solid #111; }
.line label { display: flex; align-items: center; gap: 2px; flex: 1; }
.line input { width: 55px; height: 20px; padding-left: 2px; background: #5a5a5a; border: 1px solid #111; border-width: 2px 0 0 2px; }
.line label svg { width: 11px; height: 17px; }
.grid-info { width: 103px; display: flex; flex-direction: column; gap: 2px; padding-right: 4px; }
.grid-info > * { height: 23px; padding-left: 5px; line-height: 22px; border: 1px solid #111; border-width: 1px 1px 0 1px; justify-content: flex-start; }
.key { width: 42px; height: 44px; border: 1px solid #111; border-width: 0 1px 1px 0; }
.keys { width: 72px; display: flex; flex-direction: column; gap: 1px; padding-left: 4px; }
.keys button { height: 23px; border: 1px solid #111; border-width: 0 1px 1px 0; }
.filters { width: 114px; padding-left: 4px; display: flex; flex-direction: column; gap: 4px; }
.filters .sel { height: 20px; }
.filters div { display: flex; gap: 1px; height: 20px; }
.tangent { width: 20px; border: 1px solid #111; border-width: 0 1px 1px 0; }
.kf { flex: 1; border: 1px solid #111; border-width: 0 1px 1px 0; }
.play { width: 136px; display: flex; justify-content: space-between; align-items: flex-start; padding: 0 3px 0 10px; }
.play button { width: 24px; height: 20px; }

/* task bar */
.taskbar { height: 39px; flex: none; display: flex; border-top: 1px solid #99a; background: linear-gradient(90deg, #0b0f0b 95px, #2b352f 160px, #53615c 240px, #7c8ea3 400px, #8ba3c2 470px, #8fa9c8 520px, #8199b8 538px, #8fabc9 556px, #7c94b2 700px, #9ab8db 850px, #a0bcdd 970px, #8aa4c4 988px, #9dbadb 1006px, #a3bfdf 1150px, #93abc9 1250px, #73859e 1300px, #8294ae); align-items: center; color: #fff; }
.orb { width: 4px; height: 28px; margin-right: 26px; background: linear-gradient(#3f7ec5 50%, #c53f30 50%); border-radius: 0 4px 4px 0; }
.search { width: 34px; }
.dots { width: 8px; height: 30px; background: radial-gradient(circle, #234 1px, transparent 1px) 0 0 / 4px 4px; }
.dots.dim { margin-left: 17px; background-image: radial-gradient(circle, #666 1px, transparent 1px); }
.apps { display: flex; gap: 4px; margin-left: 11px; }
.apps button { width: 58px; height: 38px; border: 1px solid #b6bdb8; border-radius: 3px; background: linear-gradient(135deg, #dde3df88, #59645b99 50%, #a9b2ab66); }
.apps .lit { background: linear-gradient(135deg, #eef3f799, #9aa7b077 50%, #c9d5e088); }
.tray { margin-left: auto; display: flex; align-items: center; gap: 6px; padding-right: 2px; font-family: "Noto Sans CJK SC", sans-serif; }
.dots + .lang { margin: 0 -2px 2px 16px; width: 18px; font: 13px/16px "Liberation Mono", monospace; }
.temp { width: 68px; display: flex; flex-direction: column; align-items: center; margin: 0 8px 0 6px; font-size: 13px; }
.tray .kicon { margin: 0 4px 0 8px; }
.tray .later { margin-left: 28px; }

/* floating widgets of other programs */
.ime { position: absolute; right: 0; bottom: 39px; width: 124px; height: 26px; display: flex; align-items: center; gap: 6px; background: linear-gradient(90deg, transparent 20px, #fff 20px); color: #2274b8; font-size: 16px; font-weight: bold; }
.ime .hand { margin: 4px 0 0 -1px; }
.float-ball { position: absolute; right: 0; top: 728px; display: flex; align-items: center; color: #fff; }
.ball { width: 48px; height: 48px; position: relative; z-index: 1; border: 2px solid #e6f5ec; border-radius: 50%; display: grid; place-items: center; font-size: 14px; background: radial-gradient(ellipse 14px 5px at 50% 14%, #bfe, transparent), linear-gradient(#157a5e 50%, #3fc052 50%); box-shadow: 0 2px 4px #222; }
.rates { width: 29px; height: 38px; margin-left: -10px; padding-left: 12px; display: flex; flex-direction: column; justify-content: center; line-height: 14px; background: linear-gradient(#fafafa, #ccd); color: #c44; font-weight: bold; }
.rates span:last-child { color: #375; }
```
